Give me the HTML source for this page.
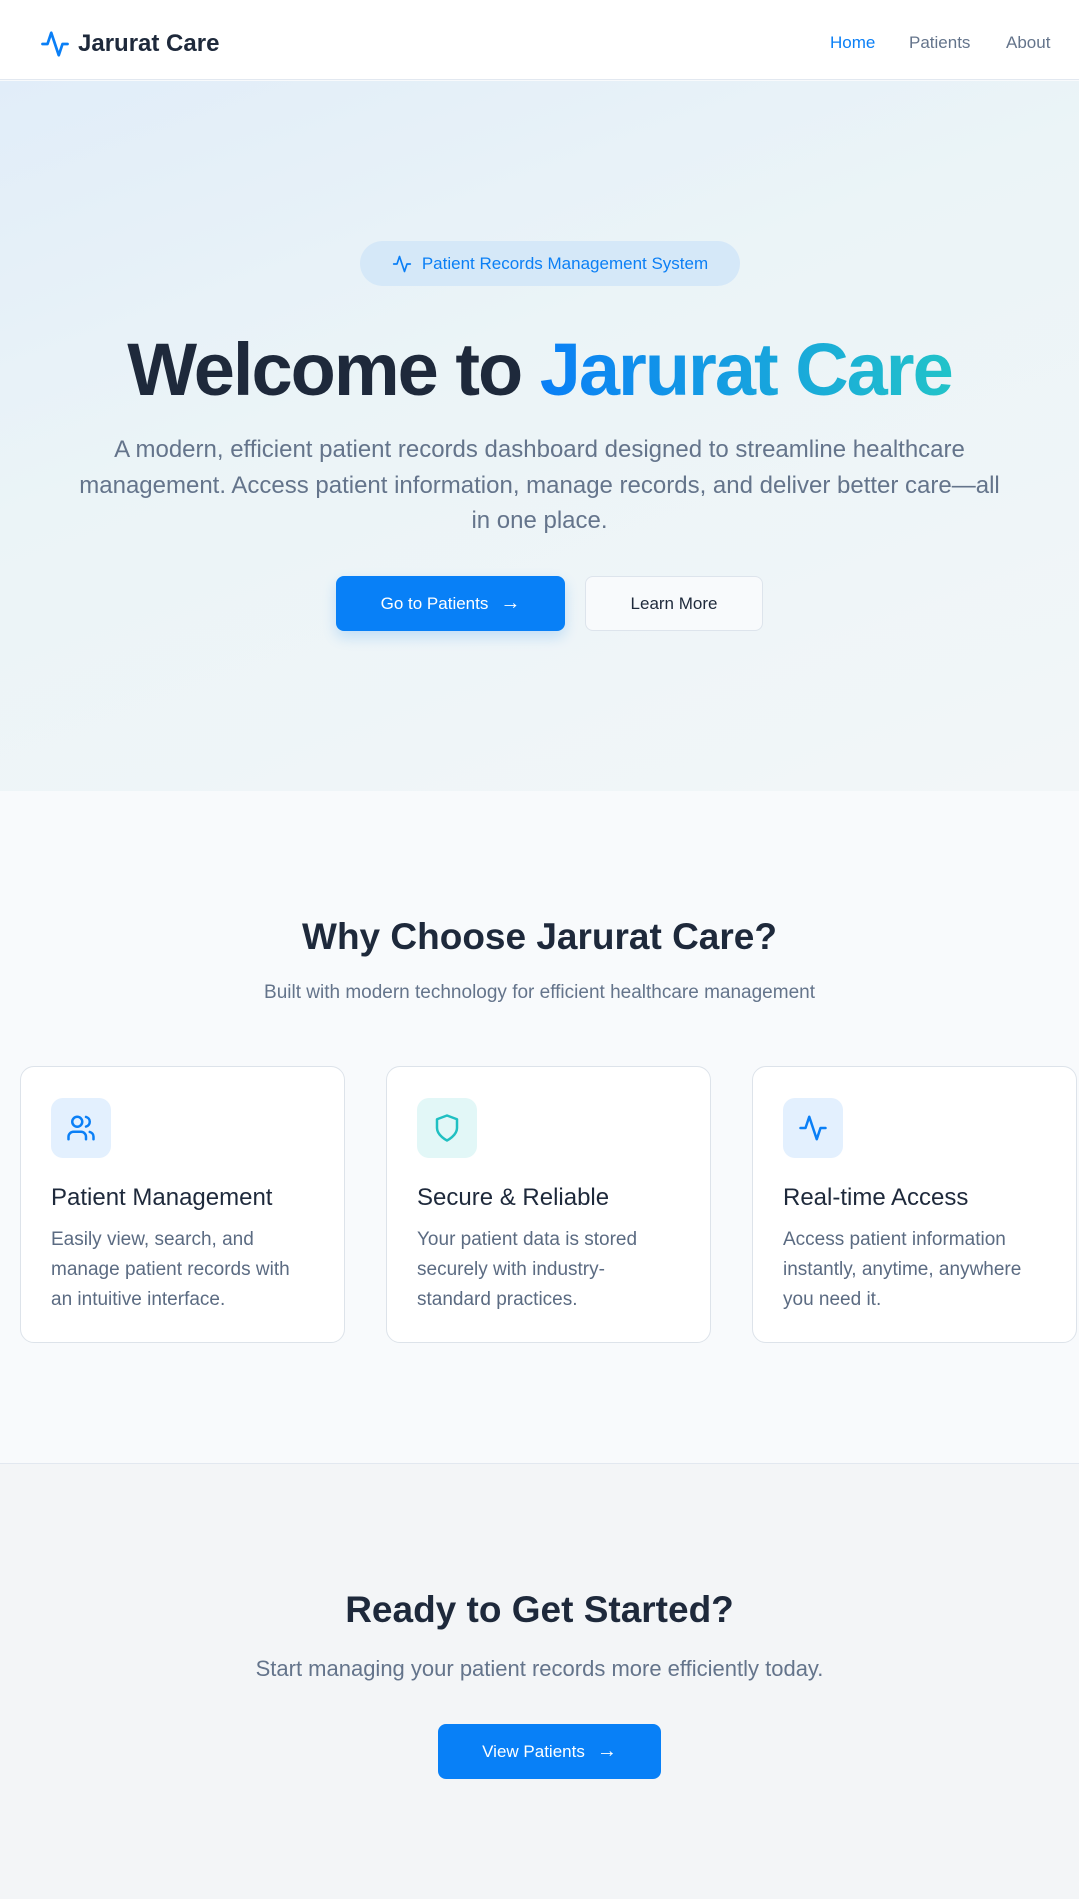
<!DOCTYPE html>
<html><head><meta charset="utf-8">
<style>
*{box-sizing:border-box;margin:0;padding:0}
body{width:1079px;height:1899px;font-family:"Liberation Sans",sans-serif;color:#1f2937;background:#f8fafc;position:relative;overflow:hidden}
header{position:absolute;left:0;top:0;width:1079px;height:80px;background:#fff;border-bottom:1px solid #e2e8f0}
.logo{position:absolute;left:40px;top:29px;display:flex;align-items:center;gap:8px;font-weight:bold;font-size:24px;color:#1e293b}
.nav a{position:absolute;top:33px;font-size:17px;color:#64748b;text-decoration:none}
.hero{position:absolute;left:0;top:81px;width:1079px;height:710px;background:linear-gradient(160deg,#e1edf9 0%,#ebf4f7 40%,#f2f6f8 100%)}
.badge{position:absolute;left:360px;top:241px;width:380px;height:45px;border-radius:23px;background:#d5e8f8;color:#0b7ff5;font-size:17px;display:flex;align-items:center;justify-content:center;gap:10px}
h1{position:absolute;left:0;width:1079px;top:327px;text-align:center;font-size:74px;font-weight:bold;letter-spacing:-2px;color:#1e293b;line-height:86px}
h1 span{background:linear-gradient(90deg,#0a7ff6,#22c3c9);-webkit-background-clip:text;background-clip:text;color:transparent}
.lead{position:absolute;left:74px;width:931px;top:432px;text-align:center;font-size:24px;line-height:35.5px;color:#64748b}
.btn{position:absolute;display:flex;align-items:center;justify-content:center;gap:12px;font-size:17px;border-radius:8px}
.primary{background:#0880f7;color:#fff;box-shadow:0 6px 14px rgba(8,128,247,.2)}
.sec{background:#f8fafc;color:#1e293b;border:1px solid #dde4ec}
h2{position:absolute;left:0;width:1079px;text-align:center;font-size:37px;font-weight:bold;color:#1e293b}
.sub{position:absolute;left:0;width:1079px;text-align:center;color:#64748b}
.card{position:absolute;top:1066px;width:325px;height:277px;background:#fff;border:1px solid #dde3ea;border-radius:14px}
.ic{position:absolute;left:30px;top:31px;width:60px;height:60px;border-radius:12px;display:flex;align-items:center;justify-content:center}
.card h3{position:absolute;left:30px;top:117px;font-size:24px;font-weight:normal;color:#1e293b}
.card p{position:absolute;left:30px;top:158px;width:252px;font-size:19px;line-height:30px;color:#5b6b82}
.cta{position:absolute;left:0;top:1463px;width:1079px;height:436px;background:#f3f5f7;border-top:1px solid #e2e8f0}
</style></head><body>
<header>
<div class="logo"><svg width="30" height="30" viewBox="0 0 24 24" fill="none" stroke="#0a7ff6" stroke-width="2.2" stroke-linecap="round" stroke-linejoin="round"><path d="M22 12h-4l-3 9L9 3l-3 9H2"/></svg>Jarurat Care</div>
<div class="nav"><a style="left:830px;color:#0a7ff6">Home</a><a style="left:909px">Patients</a><a style="left:1006px">About</a></div>
</header>
<div class="hero"></div>
<div class="badge"><svg width="20" height="20" viewBox="0 0 24 24" fill="none" stroke="#0a7ff6" stroke-width="2" stroke-linecap="round" stroke-linejoin="round"><path d="M22 12h-4l-3 9L9 3l-3 9H2"/></svg>Patient Records Management System</div>
<h1>Welcome to <span>Jarurat Care</span></h1>
<div class="lead">A modern, efficient patient records dashboard designed to streamline healthcare management. Access patient information, manage records, and deliver better care—all in one place.</div>
<div class="btn primary" style="left:336px;top:576px;width:229px;height:55px">Go to Patients <span style="font-size:20px">→</span></div>
<div class="btn sec" style="left:585px;top:576px;width:178px;height:55px">Learn More</div>

<h2 style="top:916px">Why Choose Jarurat Care?</h2>
<div class="sub" style="top:982px;font-size:19px">Built with modern technology for efficient healthcare management</div>

<div class="card" style="left:20px"><div class="ic" style="background:#e3f0fe"><svg width="30" height="30" viewBox="0 0 24 24" fill="none" stroke="#0a7ff6" stroke-width="2" stroke-linecap="round" stroke-linejoin="round"><path d="M16 21v-2a4 4 0 0 0-4-4H6a4 4 0 0 0-4 4v2"/><circle cx="9" cy="7" r="4"/><path d="M22 21v-2a4 4 0 0 0-3-3.87"/><path d="M16 3.13a4 4 0 0 1 0 7.75"/></svg></div><h3>Patient Management</h3><p>Easily view, search, and manage patient records with an intuitive interface.</p></div>
<div class="card" style="left:386px"><div class="ic" style="background:#e2f7f7"><svg width="30" height="30" viewBox="0 0 24 24" fill="none" stroke="#20c0c2" stroke-width="2" stroke-linecap="round" stroke-linejoin="round"><path d="M12 22s8-4 8-10V5l-8-3-8 3v7c0 6 8 10 8 10z"/></svg></div><h3>Secure &amp; Reliable</h3><p>Your patient data is stored securely with industry-standard practices.</p></div>
<div class="card" style="left:752px"><div class="ic" style="background:#e3f0fe"><svg width="30" height="30" viewBox="0 0 24 24" fill="none" stroke="#0a7ff6" stroke-width="2" stroke-linecap="round" stroke-linejoin="round"><path d="M22 12h-4l-3 9L9 3l-3 9H2"/></svg></div><h3>Real-time Access</h3><p>Access patient information instantly, anytime, anywhere you need it.</p></div>

<div class="cta"></div>
<h2 style="top:1589px">Ready to Get Started?</h2>
<div class="sub" style="top:1656px;font-size:22px">Start managing your patient records more efficiently today.</div>
<div class="btn primary" style="left:438px;top:1724px;width:223px;height:55px;box-shadow:none">View Patients <span style="font-size:20px">→</span></div>
</body></html>
